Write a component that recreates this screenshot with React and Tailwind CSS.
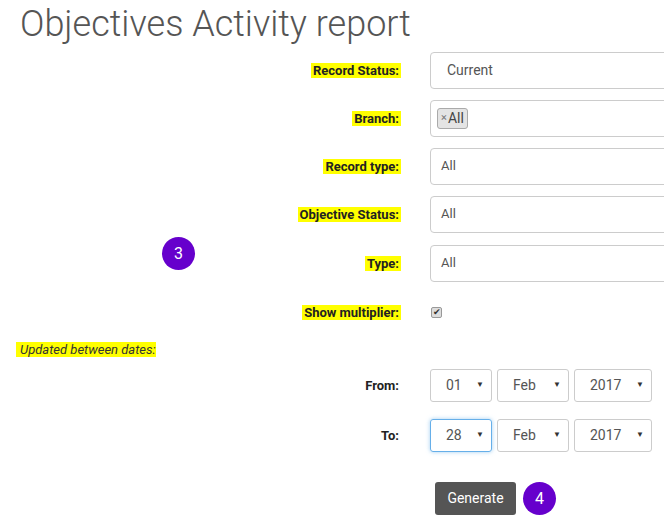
const hl = 'bg-[#ffff00] px-[2px] font-bold text-[13px] text-[#222]';

function Row({ label, children, h = 'h-[48px]', plain }) {
  return (
    <div className={`flex items-center ${h}`}>
      <div className="w-[402px] shrink-0 text-right pr-[1px]">
        <span className={plain ? 'px-[2px] font-bold text-[13px] text-[#222]' : hl}>{label}</span>
      </div>
      <div className="ml-[28px] flex-1">{children}</div>
    </div>
  );
}

function Input({ children, cls = 'pl-[10px]' }) {
  return (
    <div className={`h-[37px] w-[260px] border border-[#ccc] rounded-[4px] bg-white flex items-center text-[13px] text-[#555] ${cls}`}>{children}</div>
  );
}

function Sel({ v, w, focus }) {
  return (
    <div className={`h-[33px] ${w} border rounded-[3px] flex items-center justify-between pl-[15px] pr-[7px] text-[14px] text-[#555] ${focus ? 'border-[#66afe9] shadow-[0_0_4px_rgba(102,175,233,0.6)]' : 'border-[#ccc]'}`}>
      <span>{v}</span><span className="text-[8px] text-[#333]">▼</span>
    </div>
  );
}

function Dot({ n, cls }) {
  return <div className={`w-[33px] h-[33px] rounded-full bg-[#6600cc] text-white flex items-center justify-center text-[16px] ${cls}`}>{n}</div>;
}

export default function App() {
  return (
    <div className="relative w-[664px] h-[528px] overflow-hidden bg-white font-[Roboto,sans-serif]">
      <h1 className="ml-[20px] text-[36px] font-light text-[#555] leading-[48px] whitespace-nowrap">Objectives Activity report</h1>
      <Dot n="3" cls="absolute left-[162px] top-[237px]" />
      <div className="mt-[-2px]">
        <Row label="Record Status:"><Input cls="pl-[16px] text-[14px]">Current</Input></Row>
        <Row label="Branch:">
          <Input cls="pl-[6px]"><span className="border border-[#aaa] bg-[#e4e4e4] rounded-[3px] px-[3px] h-[21px] flex items-center text-[14px] text-[#444]"><span className="text-[11px] text-[#777] mr-[1px]">×</span>All</span></Input>
        </Row>
        <Row label="Record type:"><Input>All</Input></Row>
        <Row label="Objective Status:"><Input>All</Input></Row>
        <Row label="Type:" h="h-[50px]"><Input>All</Input></Row>
        <Row label="Show multiplier:">
          <div className="w-[11px] h-[11px] ml-[1px] rounded-[2px] bg-[#ddd] border border-[#999] flex items-center justify-center text-[9px] leading-none text-[#333]">✔</div>
        </Row>
        <div className="h-[24px] pl-[16px] pt-[1px]">
          <span className="bg-[#ffff00] pl-[4px] italic text-[13px] text-[#333]">Updated between dates:</span>
        </div>
        <Row label="From:" h="h-[50px]" plain>
          <div className="flex gap-[5px]"><Sel v="01" w="w-[62px]" /><Sel v="Feb" w="w-[72px]" /><Sel v="2017" w="w-[78px]" /></div>
        </Row>
        <Row label="To:" h="h-[50px]" plain>
          <div className="flex gap-[5px]"><Sel v="28" w="w-[62px]" focus /><Sel v="Feb" w="w-[72px]" /><Sel v="2017" w="w-[78px]" /></div>
        </Row>
        <div className="flex items-center ml-[435px] mt-[22px] gap-[7px]">
          <div className="h-[33px] w-[81px] rounded-[3px] bg-[#555] text-white text-[14px] flex items-center justify-center">Generate</div>
          <Dot n="4" />
        </div>
      </div>
    </div>
  );
}
